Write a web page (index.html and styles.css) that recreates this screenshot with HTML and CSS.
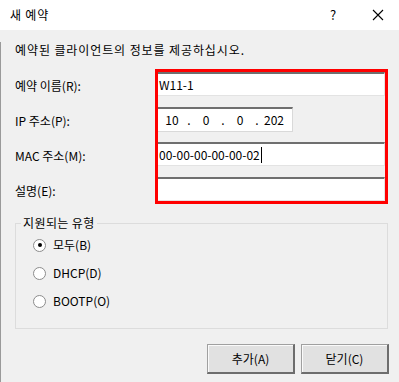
FILE: index.html
```html
<html>
<head>
	<title>새 예약</title>
	<link rel="stylesheet" href="styles.css">
</head>
<body>
	<div id="dialog">
		<div class="titlebar">
			<span class="title">새 예약</span>
			<span class="help">?</span>
			<span class="close">
				<svg width="12" height="12" viewBox="0 0 12 12"><path d="M1 1L11 11M11 1L1 11" stroke="#000" stroke-width="1.1" fill="none"/></svg>
			</span>
		</div>
		<div class="content">
			<div class="intro">예약된 클라이언트의 정보를 제공하십시오.</div>
			<div class="fields">
				<div class="row">
					<label class="label">예약 이름(R):</label>
					<div class="field">W11-1</div>
				</div>
				<div class="row">
					<label class="label">IP 주소(P):</label>
					<div class="field ip">
						<span class="octet">10</span><span class="dot">.</span><span class="octet">0</span><span class="dot">.</span><span class="octet">0</span><span class="dot">.</span><span class="octet">202</span>
					</div>
				</div>
				<div class="row">
					<label class="label">MAC 주소(M):</label>
					<div class="field">00-00-00-00-00-02<span class="caret"></span></div>
				</div>
				<div class="row last">
					<label class="label">설명(E):</label>
					<div class="field"></div>
				</div>
			</div>
			<fieldset class="group">
				<legend>지원되는 유형</legend>
				<div class="radio"><span class="circle on"></span>모두(B)</div>
				<div class="radio"><span class="circle"></span>DHCP(D)</div>
				<div class="radio"><span class="circle"></span>BOOTP(O)</div>
			</fieldset>
			<div class="buttons">
				<button class="btn">추가(A)</button>
				<button class="btn">닫기(C)</button>
			</div>
		</div>
		<div class="highlight"></div>
	</div>
</body>
</html>
```
FILE: styles.css
```css
body{
	margin: 0;
	background: #f0f0f0;
	font-family: "Noto Sans CJK KR", "Noto Sans", sans-serif;
	font-size: 12px;
	color: #000;
}

#dialog{
	position: relative;
	width: 399px;
	height: 382px;
	overflow: hidden;
}

.titlebar{
	display: flex;
	align-items: center;
	height: 30px;
	padding-left: 10px;
	background: #fff;
	font-size: 12px;
	line-height: 16px;
}

.title{
	flex: 1;
	letter-spacing: 0.8px;
}

.help{
	width: 14px;
	margin-right: 32px;
	font-size: 13px;
	text-align: center;
}

.close{
	display: flex;
	width: 12px;
	height: 12px;
	margin-right: 15px;
}

.content{
	height: 352px;
	padding: 0 11px 0 14px;
	border-left: 1px solid #9a9a9a;
	box-sizing: border-box;
}

.intro{
	margin-top: 12px;
	line-height: 16px;
	letter-spacing: 0.9px;
}

.fields{
	margin-top: 14px;
}

.row{
	display: flex;
	height: 24px;
	margin-bottom: 11px;
}

.row.last{
	margin-bottom: 0;
}

.label{
	width: 140px;
	padding-top: 6px;
	line-height: 16px;
}

.field{
	display: flex;
	align-items: center;
	width: 230px;
	height: 24px;
	box-sizing: border-box;
	padding-left: 2px;
	background: #fff;
	border-top: 2px solid #6f6f6f;
	border-left: 2px solid #6f6f6f;
	border-right: 1px solid #e3e3e3;
	border-bottom: 1px solid #e3e3e3;
	line-height: 16px;
	white-space: pre;
}

.field.ip{
	width: 138px;
	height: 25px;
	padding-left: 3px;
	border-right: 1px solid #d9d9d9;
	border-bottom: 1px solid #d9d9d9;
}

.octet{
	width: 24px;
	text-align: center;
}

.dot{
	width: 10px;
	text-align: center;
}

.caret{
	display: inline-block;
	width: 1px;
	height: 16px;
	margin-left: 1px;
	background: #000;
}

.group{
	margin: 14px 0 0 0;
	padding: 0 0 13px 17px;
	width: 373px;
	box-sizing: border-box;
	border: 1px solid #dcdcdc;
}

.group legend{
	margin-left: -12px;
	padding: 0 2px;
	line-height: 16px;
	letter-spacing: 0.4px;
}

.radio{
	display: flex;
	align-items: center;
	height: 28px;
	line-height: 16px;
}

.circle{
	display: flex;
	align-items: center;
	justify-content: center;
	width: 11px;
	height: 11px;
	margin-right: 7px;
	border: 1px solid #8c8c8c;
	border-radius: 50%;
	background: #fff;
}

.circle.on::after{
	content: "";
	width: 4px;
	height: 4px;
	border-radius: 50%;
	background: #000;
}

.buttons{
	display: flex;
	justify-content: flex-end;
	gap: 6px;
	margin-top: 15px;
	margin-right: -1px;
}

.btn{
	width: 88px;
	height: 30px;
	padding: 0;
	font-family: "Noto Sans CJK KR", "Noto Sans", sans-serif;
	font-size: 12px;
	color: #000;
	background: #e1e1e1;
	border-top: 1px solid #a0a0a0;
	border-left: 1px solid #a0a0a0;
	border-right: 2px solid #6d6d6d;
	border-bottom: 2px solid #6d6d6d;
	box-shadow: inset 1px 1px #fafafa;
}

.highlight{
	position: absolute;
	left: 155px;
	top: 69px;
	width: 233px;
	height: 135px;
	box-sizing: border-box;
	border: 3px solid #ff0000;
}
```
